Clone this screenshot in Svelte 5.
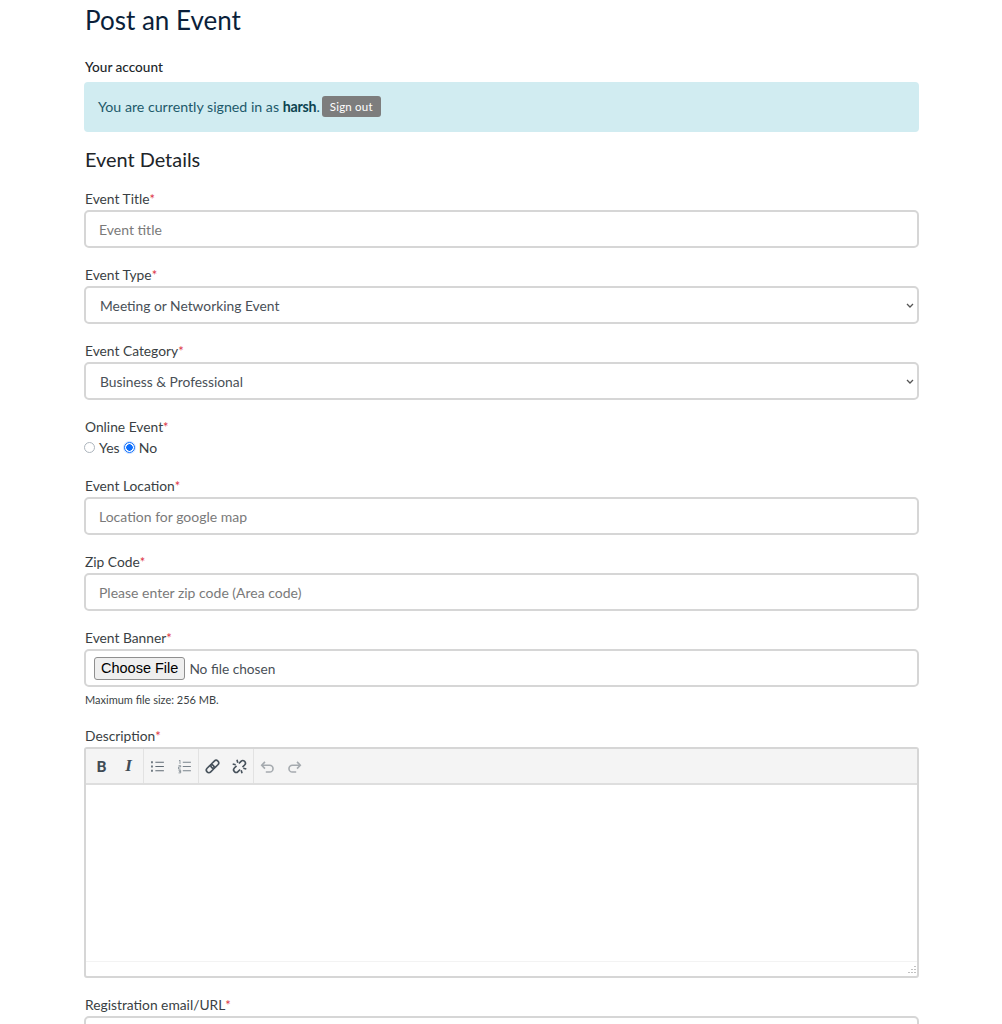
<script lang="ts">
  const eventTypes = ['Meeting or Networking Event'];
  const categories = ['Business & Professional'];
</script>

<main class="page">
  <h1>Post an Event</h1>

  <h2 class="account-title">Your account</h2>
  <div class="alert">
    <span>You are currently signed in as <strong>harsh</strong>.</span>
    <button type="button" class="sign-out">Sign out</button>
  </div>

  <h3>Event Details</h3>

  <div class="field">
    <label for="title">Event Title<span class="req">*</span></label>
    <input id="title" type="text" placeholder="Event title" />
  </div>

  <div class="field">
    <label for="type">Event Type<span class="req">*</span></label>
    <div class="select-wrap">
      <select id="type">
        {#each eventTypes as t}<option>{t}</option>{/each}
      </select>
      <svg class="chevron" viewBox="0 0 8 5"><path d="M1 1l3 3 3-3"/></svg>
    </div>
  </div>

  <div class="field">
    <label for="category">Event Category<span class="req">*</span></label>
    <div class="select-wrap">
      <select id="category">
        {#each categories as c}<option>{c}</option>{/each}
      </select>
      <svg class="chevron" viewBox="0 0 8 5"><path d="M1 1l3 3 3-3"/></svg>
    </div>
  </div>

  <div class="field online">
    <div class="label">Online Event<span class="req">*</span></div>
    <div class="radios">
      <input type="radio" name="online" id="yes" /><label for="yes">Yes</label>
      <input type="radio" name="online" id="no" checked /><label for="no">No</label>
    </div>
  </div>

  <div class="field">
    <label for="location">Event Location<span class="req">*</span></label>
    <input id="location" type="text" placeholder="Location for google map" />
  </div>

  <div class="field">
    <label for="zip">Zip Code<span class="req">*</span></label>
    <input id="zip" type="text" placeholder="Please enter zip code (Area code)" />
  </div>

  <div class="field banner">
    <label for="banner">Event Banner<span class="req">*</span></label>
    <div class="file-box">
      <button type="button" class="choose">Choose File</button>
      <span>No file chosen</span>
    </div>
    <small>Maximum file size: 256 MB.</small>
  </div>

  <div class="field">
    <div class="label">Description<span class="req">*</span></div>
    <div class="editor">
      <div class="toolbar">
        <div class="group first">
          <span class="tool b">B</span>
          <span class="tool i">I</span>
        </div>
        <div class="group lists">
          <span class="tool">
            <svg viewBox="0 0 20 20"><path d="M7.500 5h10M7.500 10h10M7.500 15h10"/><path class="dot" d="M2.500 5h2M2.500 10h2M2.500 15h2"/></svg>
          </span>
          <span class="tool">
            <svg viewBox="0 0 20 20" class="light"><path d="M8 5h9.500M8 10h9.500M8 15h9.500"/><path class="thin" d="M3.500 3.500l1.200-1v4.500M3 9h2.500v1.500H3V13h2.500M3 14.500h2.500v3H3M3.500 16h2"/></svg>
          </span>
        </div>
        <div class="group links">
          <span class="tool">
            <svg viewBox="0 0 20 20"><g transform="rotate(-45 10 10)"><rect x="1" y="7" width="10.500" height="6" rx="3"/><rect x="8.500" y="7" width="10.500" height="6" rx="3"/></g></svg>
          </span>
          <span class="tool">
            <svg viewBox="0 0 20 20"><g transform="rotate(-45 10 10)"><path d="M8 7H4.500a3 3 0 0 0 0 6H8"/><path d="M12 7h3.500a3 3 0 0 1 0 6H12"/></g><path d="M7 2l1 3.500M2 7l3.500 1M13 18l-1-3.500M18 13l-3.500-1"/></svg>
          </span>
        </div>
        <div class="group off">
          <span class="tool">
            <svg viewBox="0 0 20 20"><path d="M3.500 8.500h9a4 4 0 0 1 0 8H8"/><path d="M7 4.500l-3.800 4 3.800 4"/></svg>
          </span>
          <span class="tool">
            <svg viewBox="0 0 20 20"><path d="M16.500 8.500h-9a4 4 0 0 0 0 8H12"/><path d="M13 4.500l3.800 4-3.800 4"/></svg>
          </span>
        </div>
      </div>
      <div class="edit-area"></div>
      <div class="statusbar">
        <svg class="grip" viewBox="0 0 10 10"><path d="M9 1v1M9 4v1M6 4v1M9 7v1M6 7v1M3 7v1"/></svg>
      </div>
    </div>
  </div>

  <div class="field">
    <label for="reg">Registration email/URL<span class="req">*</span></label>
    <input id="reg" type="text" />
  </div>
</main>

<style>
  :global(body) {
    margin: 0;
    background: #fff;
    color: #212529;
    font-family: "Lato", "Open Sans", sans-serif;
    font-size: 14px;
    height: 1024px;
    overflow: hidden;
  }

  .page {
    width: 835px;
    margin-left: 84px;
    padding-top: 3px;
    height: 1021px;
    overflow: hidden;
  }

  h1 {
    margin: 0 0 0 1px;
    font-size: 26px;
    font-weight: 400;
    line-height: 34px;
    color: #0b1f3a;
  }

  .account-title {
    margin: 20px 0 5px 1px;
    font-size: 13.600px;
    font-weight: 500;
    line-height: 20px;
    color: #212529;
  }

  .alert {
    background: #d1ecf1;
    color: #1d5a6b;
    border-radius: 4px;
    height: 50px;
    box-sizing: border-box;
    padding: 0 14px 2px;
    display: flex;
    align-items: center;
    gap: 2px;
    font-size: 14.200px;
  }

  .alert strong { color: #0c4450; letter-spacing: -0.2px; }

  .sign-out {
    background: #7d7d7d;
    color: #fff;
    border: 0;
    border-radius: 3px;
    height: 21px;
    width: 59px;
    padding: 0;
    font: inherit;
    font-size: 11.500px;
    letter-spacing: 0.2px;
  }

  h3 {
    margin: 15px 0 18px 1px;
    font-size: 19.900px;
    font-weight: 400;
    line-height: 24px;
    color: #212529;
  }

  .field { margin-bottom: 17px; }

  .field.online { margin-bottom: 20px; }

  .field.banner { margin-bottom: 19px; }

  .field > label,
  .label {
    display: block;
    margin-left: 1px;
    line-height: 20px;
    padding-bottom: 1px;
    font-size: 13.800px;
    color: #3a3f44;
  }

  .req { color: #dc3545; font-size: 13px; line-height: 1; }

  input[type="text"],
  select,
  .file-box {
    display: block;
    width: 100%;
    height: 38px;
    box-sizing: border-box;
    border: 2px solid #d6d6d6;
    border-radius: 5px;
    background: #fff;
    font: inherit;
    font-size: 14px;
    color: #495057;
    padding: 0 13px;
  }

  input::placeholder { color: #7a7a7a; opacity: 1; }

  .select-wrap { position: relative; }

  select {
    appearance: none;
    padding-left: 14px;
    font-size: 13.800px;
  }

  .chevron {
    position: absolute;
    right: 5px;
    top: 17px;
    width: 8px;
    height: 5px;
    fill: none;
    stroke: #555;
    stroke-width: 1.300;
    pointer-events: none;
  }

  .radios {
    display: flex;
    align-items: center;
    height: 18px;
    font-size: 14px;
    color: #3a3f44;
  }

  .radios input {
    appearance: none;
    box-sizing: border-box;
    margin: 0 4px 0 0;
    width: 11px;
    height: 11px;
    border: 1px solid #adb5bd;
    border-radius: 50%;
    background: #fff;
  }

  .radios input:checked {
    border: 1px solid #0d6efd;
    background: radial-gradient(circle, #0d6efd 0 3px, #fff 3.500px);
    box-shadow: 0 0 0 1px #cfe2ff;
  }

  .radios label { margin-right: 4px; }

  .file-box {
    display: flex;
    align-items: center;
    padding: 0 8px;
    gap: 4px;
    font-size: 13.700px;
  }

  .choose {
    height: 23px;
    padding: 0 6px;
    border: 1px solid #8f8f8f;
    border-radius: 3px;
    background: #efefef;
    color: #000;
    font-family: "Liberation Sans", Arial, sans-serif;
    font-size: 14.500px;
  }

  small {
    display: block;
    margin-top: 6px;
    margin-left: 1px;
    font-size: 11px;
    line-height: 14px;
    color: #3a3f44;
  }

  .editor {
    height: 231px;
    box-sizing: border-box;
    border: 2px solid #d6d6d6;
    border-radius: 3px;
    display: flex;
    flex-direction: column;
  }

  .toolbar {
    height: 36px;
    background: #f4f4f4;
    border-bottom: 2px solid #dedede;
    display: flex;
    align-items: center;
    flex-shrink: 0;
    box-sizing: border-box;
  }

  .group {
    display: flex;
    align-items: center;
    height: 34px;
    border-right: 1px solid #e2e2e2;
  }

  .group.first { padding: 0 1px 0 2px; }

  .group.off {
    border-right: 0;
    opacity: 0.45;
  }

  .tool {
    width: 27px;
    height: 26px;
    display: flex;
    align-items: center;
    justify-content: center;
    font-family: "Liberation Serif", serif;
    font-size: 15px;
    color: #3f4b55;
  }

  .tool.b { font-family: "Lato", sans-serif; font-weight: 900; font-size: 15px; }
  .tool.i { font-style: italic; font-weight: 700; font-size: 17px; }

  .tool svg {
    width: 17px;
    height: 17px;
    fill: none;
    stroke: #47525c;
    stroke-width: 1.900;
  }

  .lists svg { stroke-width: 1.200; stroke: #5f6a73; }
  .tool svg.light { stroke: #78828a; }
  .tool svg .thin { stroke-width: 0.900; }
  .tool svg .dot { stroke-width: 2.200; }

  .edit-area { flex: 1; background: #fff; }

  .statusbar {
    height: 15px;
    box-sizing: border-box;
    border-top: 1px solid #f3f3f3;
    position: relative;
    flex-shrink: 0;
  }

  .grip {
    position: absolute;
    right: 1px;
    bottom: 1px;
    width: 10px;
    height: 10px;
    fill: none;
    stroke: #999;
    stroke-width: 1.200;
  }
</style>
